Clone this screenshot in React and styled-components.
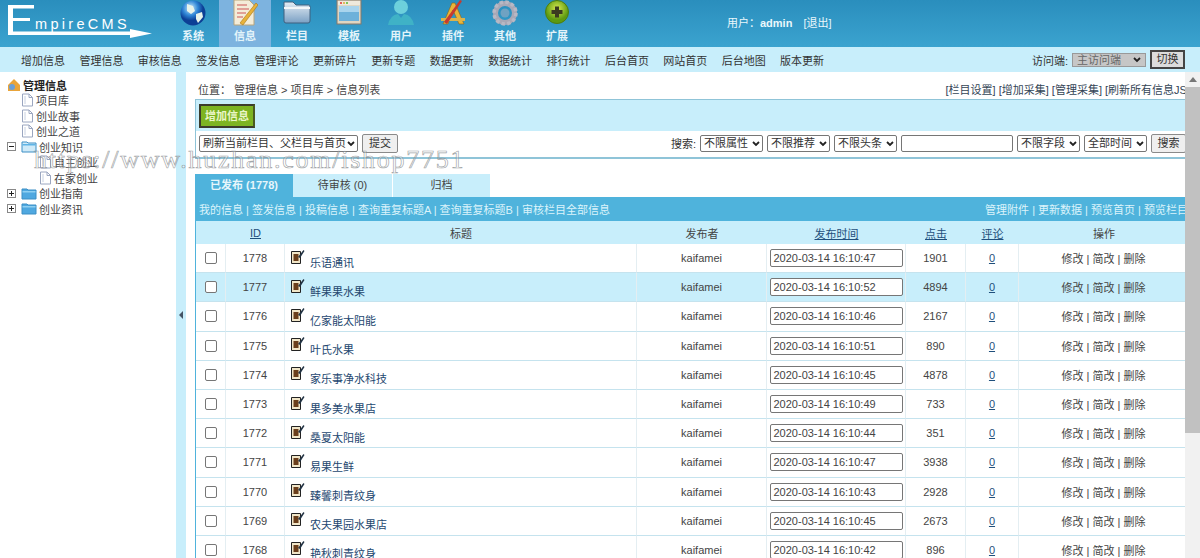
import React from "react";
import styled, { createGlobalStyle } from "styled-components";

const FONT = `"Liberation Sans", "Noto Sans CJK SC", sans-serif`;

const Global = createGlobalStyle`
  html, body { margin: 0; padding: 0; height: 100%; overflow: hidden; }
  body { font-family: ${FONT}; font-size: 11px; color: #333; background: #fff; }
  * { box-sizing: border-box; }
`;

const Page = styled.div`
  position: relative;
  width: 1200px;
  height: 558px;
  overflow: hidden;
  display: flex;
  flex-direction: column;
`;

const Header = styled.header`
  height: 47px;
  flex: none;
  display: flex;
  background: linear-gradient(#2a8ebd, #3ba3cf);
  color: #fff;
  overflow: hidden;
`;

const LogoBox = styled.div`
  width: 168px;
  flex: none;
`;

const NavIcons = styled.nav`
  display: flex;
  margin-left: -1px;
`;

const NavItem = styled.div`
  width: 52px;
  height: 47px;
  display: flex;
  flex-direction: column;
  align-items: center;
  justify-content: flex-end;
  padding-bottom: 4px;
  background: ${(p) => (p.$active ? "#7db3df" : "transparent")};
  font-size: 11px;
  font-weight: 700;
  line-height: 13px;
  color: #e3f4fa;
  svg { display: block; margin-bottom: 3px; flex: none; }
`;

const UserInfo = styled.div`
  margin-left: 144px;
  padding-top: 14px;
  font-size: 11px;
  color: #eaf7fc;
  white-space: nowrap;
  b { margin: 0 8px 0 0; font-size: 11px; }
`;

const MenuBar = styled.div`
  height: 25px;
  flex: none;
  display: flex;
  align-items: center;
  background: #c8eefb;
  padding: 0 15px 0 21px;
  font-size: 11px;
  color: #333;
`;

const MenuLink = styled.span`
  width: 58.4px;
  flex: none;
  white-space: nowrap;
`;

const MenuRight = styled.div`
  margin-left: auto;
  display: flex;
  align-items: center;
  gap: 4px;
`;

const GraySelect = styled.div`
  width: 74px;
  height: 14px;
  background: #c6c6c6;
  border: 1px solid #999;
  color: #666;
  font-size: 11px;
  line-height: 12px;
  padding-left: 4px;
  position: relative;
  svg { position: absolute; right: 4px; top: 3px; }
`;

const SwitchButton = styled.div`
  width: 35px;
  height: 19px;
  background: #dcdcdc;
  border: 2px solid #444;
  font-size: 11px;
  line-height: 15px;
  text-align: center;
`;

const Body = styled.div`
  flex: 1;
  min-height: 0;
  display: flex;
`;

const Sidebar = styled.aside`
  width: 176px;
  flex: none;
  padding: 5px 0 0 7px;
`;

const TreeRow = styled.div`
  height: 15.5px;
  display: flex;
  align-items: center;
  padding-left: ${(p) => p.$indent || 0}px;
  gap: 2px;
  white-space: nowrap;
  font-size: 11px;
  color: ${(p) => (p.$root ? "#222" : "#444")};
  font-weight: ${(p) => (p.$root ? 700 : 400)};
  svg { flex: none; }
`;

const Splitter = styled.div`
  width: 10px;
  flex: none;
  background: #c8eefb;
  display: flex;
  align-items: center;
  justify-content: center;
  padding-bottom: 0;
`;

const Content = styled.main`
  flex: 1;
  min-width: 0;
  padding: 8px 10px 0 9px;
  overflow: hidden;
`;

const Crumb = styled.div`
  height: 18px;
  display: flex;
  justify-content: space-between;
  align-items: center;
  font-size: 11px;
  color: #444;
  padding-left: 3px;
  span + span { color: #345; }
`;

const FormBox = styled.div`
  margin-top: 1px;
  height: 60px;
  border: 1px solid #8fc4d8;
  border-bottom-width: 2px;
  display: flex;
  flex-direction: column;
`;

const FormTop = styled.div`
  height: 31px;
  flex: none;
  background: #c8eefb;
  padding: 4px 3px;
`;

const GreenButton = styled.div`
  width: 56px;
  height: 24px;
  background: #7db422;
  border: 2px solid #3c3c2c;
  border-right-color: #4a5a20;
  color: #eaf6c8;
  font-size: 11px;
  font-weight: 700;
  line-height: 20px;
  text-align: center;
`;

const FormBottom = styled.div`
  flex: 1;
  background: #fff;
  display: flex;
  align-items: center;
  justify-content: space-between;
  padding: 0 3px 2px 3px;
`;

const FieldGroup = styled.div`
  display: flex;
  align-items: center;
  gap: 4px;
`;

const FakeSelect = styled.div`
  width: ${(p) => p.$w}px;
  height: 17px;
  border: 1px solid #767676;
  border-radius: 2px;
  background: #fff;
  font-size: 11px;
  line-height: 15px;
  padding-left: 3px;
  color: #333;
  white-space: nowrap;
  position: relative;
  overflow: hidden;
  svg { position: absolute; right: 2px; top: 5px; }
`;

const TextField = styled.div`
  width: ${(p) => p.$w}px;
  height: ${(p) => p.$h || 17}px;
  border: 1px solid #767676;
  border-radius: 2px;
  background: #fff;
  font-size: 11px;
  line-height: ${(p) => (p.$h || 17) - 2}px;
  padding-left: 3px;
  color: #444;
  white-space: nowrap;
`;

const GrayButton = styled.div`
  width: ${(p) => p.$w}px;
  height: 19px;
  border: 1px solid #8a8a8a;
  border-radius: 2px;
  background: #efefef;
  font-size: 11px;
  line-height: 17px;
  text-align: center;
`;

const Tabs = styled.div`
  margin-top: 15px;
  display: flex;
  margin-left: 0;
  padding-left: 0;
`;

const Tab = styled.div`
  width: ${(p) => p.$w}px;
  height: 23px;
  line-height: 23px;
  text-align: center;
  font-size: 11px;
  font-weight: ${(p) => (p.$active ? 700 : 400)};
  color: ${(p) => (p.$active ? "#e6f6fb" : "#444")};
  background: ${(p) => (p.$active ? "#4fb3dc" : "#c8eefb")};
  margin-right: ${(p) => (p.$active ? 0 : 1)}px;
`;

const Panel = styled.section`
  border-left: 1px solid #4fb3dc;
  border-right: 1px solid #4fb3dc;
`;

const ActionBar = styled.div`
  height: 24px;
  background: #4fb3dc;
  display: flex;
  align-items: center;
  justify-content: space-between;
  padding: 0 1px 0 3px;
  font-size: 11px;
  color: #dcf3fb;
  white-space: nowrap;
`;

const Table = styled.div`
  display: grid;
  grid-template-columns: 30px 59px 352px 130px 139px 60px 53px 1fr;
`;

const Row = styled.div`
  display: contents;
`;

const Cell = styled.div`
  height: ${(p) => (p.$head ? 23 : 29.2)}px;
  display: flex;
  align-items: center;
  justify-content: ${(p) => (p.$left ? "flex-start" : "center")};
  padding-left: ${(p) => (p.$left ? 6 : 0)}px;
  background: ${(p) => (p.$head || p.$hl ? "#c8eefb" : "#fff")};
  border-right: ${(p) => (p.$head ? "none" : "1px solid #e4eef2")};
  border-bottom: ${(p) => (p.$head ? "none" : "1px solid #c5e3ee")};
  font-size: 11px;
  color: #444;
  white-space: nowrap;
  overflow: hidden;
  a { color: #1f4f7c; text-decoration: underline; }
`;

const CheckBox = styled.div`
  width: 12px;
  height: 12px;
  border: 1px solid #767676;
  border-radius: 2px;
  background: #fff;
`;

const TitleLink = styled.span`
  color: #24476f;
  margin: 7px 0 0 5px;
`;

const DocGlyph = styled.svg`
  flex: none;
  margin-top: -4px;
`;

const Scrollbar = styled.div`
  position: absolute;
  right: 0;
  top: 72px;
  bottom: 0;
  width: 15px;
  background: #f1f1f1;
  display: flex;
  flex-direction: column;
  align-items: center;
`;

const ScrollArrow = styled.div`
  height: 15px;
  flex: none;
  display: flex;
  align-items: center;
  justify-content: center;
`;

const ScrollThumb = styled.div`
  width: 15px;
  height: 346px;
  background: #c1c1c1;
`;

const Watermark = styled.div`
  position: absolute;
  left: 34px;
  top: 144px;
  font-family: "Liberation Serif", serif;
  font-size: 26px;
  line-height: 32px;
  letter-spacing: 1.75px;
  white-space: nowrap;
  color: rgba(255, 255, 255, 0.35);
  -webkit-text-stroke: 0.7px rgba(120, 125, 130, 0.7);
  pointer-events: none;
`;

const Logo = () => (
  <svg width="168" height="47" viewBox="0 0 168 47">
    <path d="M8 5H34V8.500H13V18H30V21H13V31.500H130V29L152 33.500L130 38V35H8Z" fill="#fff" />
    <text x="35" y="29" fill="#fff" fontFamily="Liberation Sans" fontSize="14.5" letterSpacing="3.3">mpireCMS</text>
  </svg>
);

const Icons = {
  globe: (
    <svg width="26" height="27" viewBox="0 0 26 27">
      <defs><radialGradient id="g1" cx=".4" cy=".3"><stop offset="0" stopColor="#cfeefc" /><stop offset=".6" stopColor="#2f86d6" /><stop offset="1" stopColor="#0c3f95" /></radialGradient></defs>
      <circle cx="13" cy="13" r="12.500" fill="url(#g1)" />
      <path d="M7 4l6 2 2 5-4 3-4-3zM16 14l6-2 1 5-5 6-2-4z" fill="#e8f3ea" />
    </svg>
  ),
  doc: (
    <svg width="26" height="27" viewBox="0 0 26 27">
      <path d="M2 0H17L22 5V25H2Z" fill="#f4ecd8" stroke="#b9a57d" />
      <path d="M5 5H15M5 9H17M5 13H14M5 17H11" stroke="#c55" strokeWidth="1" />
      <path d="M8 23L24 3l2 2L11 25Z" fill="#e8b23a" stroke="#a87514" strokeWidth=".6" />
    </svg>
  ),
  folder: (
    <svg width="30" height="27" viewBox="0 0 30 27">
      <defs><linearGradient id="g2" x1="0" y1="0" x2="0" y2="1"><stop offset="0" stopColor="#e5edf4" /><stop offset="1" stopColor="#7aa0c4" /></linearGradient></defs>
      <path d="M2 2H11L14 5H27Q28 5 28 7V21Q28 23 26 23H4Q2 23 2 21Z" fill="url(#g2)" stroke="#40607e" />
      <rect x="2" y="7" width="26" height="2" fill="#f3f6f8" />
    </svg>
  ),
  window: (
    <svg width="26" height="27" viewBox="0 0 26 27">
      <rect x="1" y="0" width="24" height="24" fill="#dfd6c2" stroke="#85796a" />
      <rect x="2" y="1" width="22" height="4" fill="#efe9dc" />
      <circle cx="5" cy="3" r="1" fill="#d33" /><circle cx="8" cy="3" r="1" fill="#da3" /><circle cx="11" cy="3" r="1" fill="#5b3" />
      <rect x="3" y="6" width="20" height="15" fill="#6db1da" />
      <rect x="3" y="6" width="20" height="6" fill="#a9d4ed" />
    </svg>
  ),
  user: (
    <svg width="30" height="27" viewBox="0 0 30 27">
      <circle cx="15" cy="7" r="7" fill="#6dd0dc" />
      <path d="M2 25Q4 15 12 14L15 18L18 14Q26 15 28 25Z" fill="#3fb2c6" />
    </svg>
  ),
  tools: (
    <svg width="30" height="27" viewBox="0 0 30 27">
      <path d="M5 24L14 3H17L26 24H21L15 10L10 24Z" fill="#e8b43a" stroke="#8a6514" strokeWidth=".6" />
      <path d="M3 18H27V21H3Z" fill="#dcb34a" />
      <path d="M6 22L22 0l2 1L9 24Z" fill="#c63a30" />
    </svg>
  ),
  gear: (
    <svg width="26" height="27" viewBox="0 0 26 27">
      <circle cx="13" cy="13" r="9.500" fill="none" stroke="#a8a8b6" strokeWidth="5" />
      <circle cx="13" cy="13" r="11" fill="none" stroke="#b8b8c4" strokeWidth="3.500" strokeDasharray="3.400 2.360" />
      <circle cx="13" cy="13" r="4.500" fill="#6fa2c2" />
    </svg>
  ),
  plus: (
    <svg width="26" height="27" viewBox="0 0 26 27">
      <defs><radialGradient id="g3" cx=".5" cy=".35"><stop offset="0" stopColor="#d8ea50" /><stop offset="1" stopColor="#5d9a10" /></radialGradient></defs>
      <circle cx="13" cy="12" r="11.500" fill="url(#g3)" stroke="#4c7c10" />
      <path d="M11 6.500H15V10H18.500V14H15V17.500H11V14H7.500V10H11Z" fill="#3b3b20" />
    </svg>
  ),
};

const navItems = [
  ["globe", "系统"], ["doc", "信息", true], ["folder", "栏目"], ["window", "模板"],
  ["user", "用户"], ["tools", "插件"], ["gear", "其他"], ["plus", "扩展"],
];

const menu = ["增加信息", "管理信息", "审核信息", "签发信息", "管理评论", "更新碎片", "更新专题", "数据更新", "数据统计", "排行统计", "后台首页", "网站首页", "后台地图", "版本更新"];

const Chevron = () => (
  <svg width="8" height="6" viewBox="0 0 8 6"><path d="M1 1l3 3 3-3" fill="none" stroke="#222" strokeWidth="1.800" /></svg>
);

const DocIcon = () => (
  <svg width="13" height="14" viewBox="0 0 13 14"><path d="M1.500 1H8L11.500 4.500V13H1.500Z" fill="#fff" stroke="#9aa6c0" /><path d="M8 1V4.500H11.500" fill="none" stroke="#9aa6c0" /><path d="M4 3V11" stroke="#c7d0e0" /></svg>
);

const FolderIcon = ({ open }) => (
  <svg width="16" height="13" viewBox="0 0 16 13"><path d="M1 2H6L7 3H15V12H1Z" fill={open ? "#cfeaf8" : "#4fa8e0"} stroke="#3d8fc5" /><rect x="1.500" y="4" width="13" height="1.500" fill={open ? "#5fb4e6" : "#8fd0f2"} /></svg>
);

const Toggle = ({ plus }) => (
  <svg width="9" height="9" viewBox="0 0 9 9"><rect x=".5" y=".5" width="8" height="8" fill="#fff" stroke="#888" /><path d={plus ? "M2 4.500H7M4.500 2V7" : "M2 4.500H7"} stroke="#222" /></svg>
);

const Spacer = styled.span`
  width: ${(p) => p.$w}px;
  flex: none;
  height: 15px;
  border-bottom: ${(p) => (p.$line ? "1px dotted #aaa" : "none")};
  transform: translateY(-7px);
`;

const rows = [
  [1778, "乐语通讯", "2020-03-14 16:10:47", 1901],
  [1777, "鲜果果水果", "2020-03-14 16:10:52", 4894, true],
  [1776, "亿家能太阳能", "2020-03-14 16:10:46", 2167],
  [1775, "叶氏水果", "2020-03-14 16:10:51", 890],
  [1774, "家乐事净水科技", "2020-03-14 16:10:45", 4878],
  [1773, "果多美水果店", "2020-03-14 16:10:49", 733],
  [1772, "桑夏太阳能", "2020-03-14 16:10:44", 351],
  [1771, "易果生鲜", "2020-03-14 16:10:47", 3938],
  [1770, "臻馨刺青纹身", "2020-03-14 16:10:43", 2928],
  [1769, "农夫果园水果店", "2020-03-14 16:10:45", 2673],
  [1768, "艳秋刺青纹身", "2020-03-14 16:10:42", 896],
];

export default function App() {
  return (
    <Page>
      <Global />
      <Header>
        <LogoBox><Logo /></LogoBox>
        <NavIcons>
          {navItems.map(([icon, label, active]) => (
            <NavItem key={label} $active={active}>{Icons[icon]}{label}</NavItem>
          ))}
        </NavIcons>
        <UserInfo>用户：<b>admin</b> [退出]</UserInfo>
      </Header>
      <MenuBar>
        {menu.map((m) => <MenuLink key={m}>{m}</MenuLink>)}
        <MenuRight>
          <span>访问端:</span>
          <GraySelect>主访问端<Chevron /></GraySelect>
          <SwitchButton>切换</SwitchButton>
        </MenuRight>
      </MenuBar>
      <Body>
        <Sidebar>
          <TreeRow $root>
            <svg width="14" height="14" viewBox="0 0 14 14"><path d="M7 1L1 7v6h12V7z" fill="#e9a43a" /><circle cx="5" cy="9" r="3" fill="#6a9fd8" /></svg>
            管理信息
          </TreeRow>
          <TreeRow $indent={14}><DocIcon />项目库</TreeRow>
          <TreeRow $indent={14}><DocIcon />创业故事</TreeRow>
          <TreeRow $indent={14}><DocIcon />创业之道</TreeRow>
          <TreeRow><Toggle /><Spacer $w={1} /><FolderIcon open />创业知识</TreeRow>
          <TreeRow $indent={32}><DocIcon />自主创业</TreeRow>
          <TreeRow $indent={32}><DocIcon />在家创业</TreeRow>
          <TreeRow><Toggle plus /><Spacer $w={1} /><FolderIcon />创业指南</TreeRow>
          <TreeRow><Toggle plus /><Spacer $w={1} /><FolderIcon />创业资讯</TreeRow>
        </Sidebar>
        <Splitter>
          <svg width="5" height="8" viewBox="0 0 5 8"><path d="M4 0V8L0 4Z" fill="#456" /></svg>
        </Splitter>
        <Content>
          <Crumb>
            <span>位置：&nbsp;管理信息 &gt; 项目库 &gt; 信息列表</span>
            <span>[栏目设置] [增加采集] [管理采集] [刷新所有信息JS]</span>
          </Crumb>
          <FormBox>
            <FormTop><GreenButton>增加信息</GreenButton></FormTop>
            <FormBottom>
              <FieldGroup>
                <FakeSelect $w={159}>刷新当前栏目、父栏目与首页<Chevron /></FakeSelect>
                <GrayButton $w={36}>提交</GrayButton>
              </FieldGroup>
              <FieldGroup>
                <span>搜索:</span>
                <FakeSelect $w={63}>不限属性<Chevron /></FakeSelect>
                <FakeSelect $w={63}>不限推荐<Chevron /></FakeSelect>
                <FakeSelect $w={63}>不限头条<Chevron /></FakeSelect>
                <TextField $w={112} />
                <FakeSelect $w={63}>不限字段<Chevron /></FakeSelect>
                <FakeSelect $w={63}>全部时间<Chevron /></FakeSelect>
                <GrayButton $w={35}>搜索</GrayButton>
              </FieldGroup>
            </FormBottom>
          </FormBox>
          <Tabs>
            <Tab $active $w={98}>已发布 (1778)</Tab>
            <Tab $w={99}>待审核 (0)</Tab>
            <Tab $w={97}>归档</Tab>
          </Tabs>
          <Panel>
            <ActionBar>
              <span>我的信息 | 签发信息 | 投稿信息 | 查询重复标题A | 查询重复标题B | 审核栏目全部信息</span>
              <span>管理附件 | 更新数据 | 预览首页 | 预览栏目</span>
            </ActionBar>
            <Table>
              <Row>
                <Cell $head />
                <Cell $head><a>ID</a></Cell>
                <Cell $head>标题</Cell>
                <Cell $head>发布者</Cell>
                <Cell $head><a>发布时间</a></Cell>
                <Cell $head><a>点击</a></Cell>
                <Cell $head><a>评论</a></Cell>
                <Cell $head>操作</Cell>
              </Row>
              {rows.map(([id, title, time, hits, hl]) => (
                <Row key={id}>
                  <Cell $hl={hl}><CheckBox /></Cell>
                  <Cell $hl={hl}>{id}</Cell>
                  <Cell $hl={hl} $left>
                    <DocGlyph width="14" height="15" viewBox="0 0 14 15">
                      <path d="M.5 2.500H9.500V14.500H.5Z" fill="#f1e6c8" stroke="#222" />
                      <rect x="2.500" y="5" width="5" height="7" fill="#6b3f1c" />
                      <path d="M7 8L12.500 1l1 1L9 9Z" fill="#234" />
                    </DocGlyph>
                    <TitleLink>{title}</TitleLink>
                  </Cell>
                  <Cell $hl={hl}>kaifamei</Cell>
                  <Cell $hl={hl}><TextField $w={133} $h={18}>{time}</TextField></Cell>
                  <Cell $hl={hl}>{hits}</Cell>
                  <Cell $hl={hl}><a>0</a></Cell>
                  <Cell $hl={hl}>修改 | 简改 | 删除</Cell>
                </Row>
              ))}
            </Table>
          </Panel>
        </Content>
      </Body>
      <Scrollbar>
        <ScrollArrow><svg width="8" height="5" viewBox="0 0 8 5"><path d="M4 0L8 5H0Z" fill="#777" /></svg></ScrollArrow>
        <ScrollThumb />
      </Scrollbar>
      <Watermark>https://www.huzhan.com/ishop7751</Watermark>
    </Page>
  );
}
